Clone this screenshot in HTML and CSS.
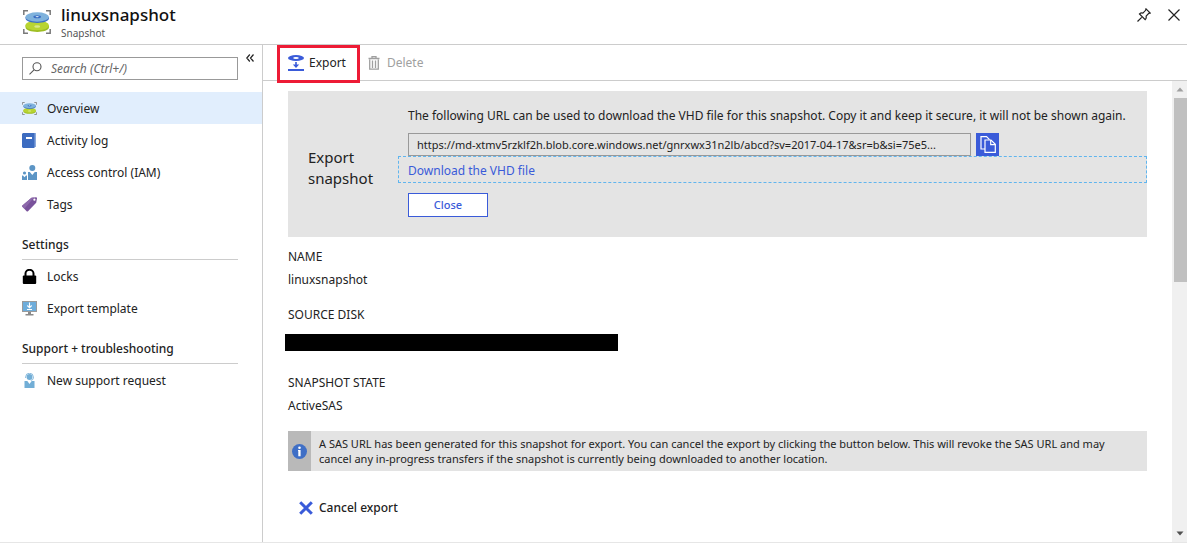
FILE: index.html
```html
<!DOCTYPE html>
<html lang="en">
<head>
<meta charset="utf-8">
<title>linuxsnapshot - Snapshot</title>
<link rel="stylesheet" href="styles.css">
</head>
<body>
<svg class="defs" aria-hidden="true">
  <symbol id="snapshot" viewBox="0 0 28 24">
    <path d="M.8 5V.8H5M23 .8h4.200V5M27.200 19v4.200H23M5 23.200H.8V19" fill="none" stroke="#7a7a7a" stroke-width="1.500"/>
    <path d="M2.500 15.500v1.500c0 6.500 23.500 6.500 23.500 0v-1.500z" fill="#9dbd22"/>
    <ellipse cx="14.200" cy="15.500" rx="11.800" ry="4.800" fill="#b8d432"/>
    <ellipse cx="14.200" cy="16.500" rx="3" ry="1.200" fill="#d9e88a"/>
    <path d="M2.500 7v1c0 6.500 23.500 6.500 23.500 0V7z" fill="#3c6fc4"/>
    <ellipse cx="14.200" cy="7" rx="11.800" ry="4.700" fill="#7fb2dc"/>
    <ellipse cx="14.200" cy="6.800" rx="3.800" ry="1.500" fill="#3c6fc4"/>
    <ellipse cx="14.200" cy="6.600" rx="1.600" ry=".6" fill="#d5e6f5"/>
  </symbol>
</svg>
<header class="header">
  <svg class="header-icon" aria-hidden="true"><use href="#snapshot"/></svg>
  <div class="header-text">
    <h1 class="title">linuxsnapshot</h1>
    <p class="subtitle">Snapshot</p>
  </div>
  <button class="icon-button" aria-label="Pin">
    <svg width="14" height="14" viewBox="0 0 14 14" fill="none" stroke="#222" stroke-width="1.200"><path d="M.5 13.500l4.200-4.200M9 .8l4.200 4.200-1.400.4-2.700 2.800c.4 1.400 0 2.500-.9 3.400L2.500 5.900c1-.9 2.200-1.100 3.400-.8l2.700-2.800z"/></svg>
  </button>
  <button class="icon-button" aria-label="Close blade">
    <svg width="12" height="12" viewBox="0 0 12 12" fill="none" stroke="#222" stroke-width="1.200"><path d="M.5.5l11 11M11.500.5l-11 11"/></svg>
  </button>
</header>
<div class="body">
  <nav class="sidebar">
    <div class="search-row">
      <div class="search">
        <svg width="13" height="13" viewBox="0 0 13 13" fill="none" stroke="#555" stroke-width="1.100" aria-hidden="true"><circle cx="8" cy="4.800" r="4"/><path d="M5 7.800L.5 12.300"/></svg>
        <input class="search-input" type="text" placeholder="Search (Ctrl+/)" aria-label="Search">
      </div>
      <button class="collapse" aria-label="Collapse menu">
        <svg width="8" height="8" viewBox="0 0 8 8" fill="none" stroke="#222" stroke-width="1.200"><path d="M3.800.5L.8 4l3 3.500M7.500.5l-3 3.500 3 3.500"/></svg>
      </button>
    </div>
    <a class="item item-active" href="#"><svg class="item-icon" aria-hidden="true"><use href="#snapshot"/></svg>Overview</a>
    <a class="item" href="#"><svg class="item-icon" viewBox="0 0 15 15" aria-hidden="true"><path d="M1.500 0H14v14H1.500z" fill="#8ba9dc"/><path d="M0 1l1-1h11.500v15H1l-1-1z" fill="#3d6cc0"/><path d="M4 4h6v2H4z" fill="#fff"/></svg>Activity log</a>
    <a class="item" href="#"><svg class="item-icon" viewBox="0 0 15 15" fill="#5c95c5" aria-hidden="true"><circle cx="10.300" cy="3" r="3"/><path d="M6 15V7h1.800l2.500 3 2.500-3H15v8z"/><circle cx="2.500" cy="8" r="1.600"/><path d="M0 15v-4.500h1l1.500 1.700L4 10.500h1V15z"/></svg>Access control (IAM)</a>
    <a class="item" href="#"><svg class="item-icon" viewBox="0 0 15 15" aria-hidden="true"><path d="M9.500.8L14 .2q1 0 1 1l-.8 4.500L6 14.200q-.7.500-1.400 0L.4 9.800q-.6-.7 0-1.300z" fill="#79529b"/><path d="M9.500.8L.4 8.500q-.6.6 0 1.300l2 2L12 .5z" fill="#8d69ab"/><circle cx="12.400" cy="2.700" r="1.100" fill="#fff"/></svg>Tags</a>
    <h2 class="section">Settings</h2>
    <a class="item" href="#"><svg class="item-icon" viewBox="0 0 15 15" aria-hidden="true"><path d="M3.500 7V4.500a4 3.700 0 0 1 8 0V7" fill="none" stroke="#000" stroke-width="2"/><rect x=".8" y="6.500" width="13.400" height="8.500" rx="1" fill="#000"/></svg>Locks</a>
    <a class="item" href="#"><svg class="item-icon" viewBox="0 0 15 15" aria-hidden="true"><path d="M0 0h15v11H0z" fill="#9b9b9b"/><path d="M1 1h13v9H1z" fill="#6eaddb"/><path d="M6 11h3v2h2.500v1.500h-8V13H6z" fill="#8a8a8a"/><path d="M7.500 1.500v5M5.300 4.500l2.200 2.200 2.200-2.200M5 8.500h5" fill="none" stroke="#fff" stroke-width="1.100"/></svg>Export template</a>
    <h2 class="section">Support + troubleshooting</h2>
    <a class="item" href="#"><svg class="item-icon" viewBox="0 0 15 15" aria-hidden="true"><circle cx="7.500" cy="4" r="2.900" fill="#72aed6"/><path d="M3.700 5V3.800a3.800 3.500 0 0 1 7.600 0V5q0 2-2.500 2.400" fill="none" stroke="#82b7dc"/><path d="M2.500 8h2.800l2.200 3 2.200-3h2.800v7h-10z" fill="#72aed6"/></svg>New support request</a>
  </nav>
  <main class="main">
    <div class="toolbar">
      <button class="command command-marked">
        <svg width="16" height="16" viewBox="0 0 16 16" aria-hidden="true"><ellipse cx="8" cy="3" rx="8" ry="3" fill="#3a5bd9"/><ellipse cx="8" cy="3" rx="2.800" ry="1" fill="#fff"/><path d="M7.200 7h1.600v2.500h2.400L8 13 4.800 9.500h2.400zM0 14h16v2H0z" fill="#3a5bd9"/></svg>
        Export
      </button>
      <button class="command" disabled>
        <svg width="12" height="14" viewBox="0 0 12 14" fill="none" stroke="#a0a0a0" stroke-width="1.300" aria-hidden="true"><path d="M.5 2.500h11M4 2V.7h4V2M1.700 3.500v9.700h8.600V3.500M4.500 4.500V12M7.500 4.500V12"/></svg>
        Delete
      </button>
    </div>
    <div class="viewport">
      <div class="content">
        <section class="export">
          <h2 class="export-title">Export snapshot</h2>
          <div class="export-body">
            <p class="export-note">The following URL can be used to download the VHD file for this snapshot. Copy it and keep it secure, it will not be shown again.</p>
            <div class="url-row">
              <input class="url" type="text" readonly aria-label="Download URL" value="https://md-xtmv5rzklf2h.blob.core.windows.net/gnrxwx31n2lb/abcd?sv=2017-04-17&amp;sr=b&amp;si=75e5...">
              <button class="copy" aria-label="Copy">
                <svg width="16" height="17" viewBox="0 0 16 17" fill="none" stroke="#fff" stroke-width="1.200" aria-hidden="true"><path d="M5 13H1V.6h5.500l3 3"/><path d="M5 4h6l4.300 4.300v8H5z" fill="#3a5bd9"/><path d="M10.700 4v4.600h4.600"/></svg>
              </button>
            </div>
            <a class="download" href="#">Download the VHD file</a>
            <button class="close">Close</button>
          </div>
        </section>
        <dl class="facts">
          <dt>NAME</dt>
          <dd>linuxsnapshot</dd>
          <dt>SOURCE DISK</dt>
          <dd class="redacted"></dd>
          <dt>SNAPSHOT STATE</dt>
          <dd>ActiveSAS</dd>
        </dl>
        <div class="notice">
          <div class="notice-icon">
            <svg width="15" height="15" viewBox="0 0 15 15" aria-hidden="true"><circle cx="7.500" cy="7.500" r="7.500" fill="#3f6fc6"/><circle cx="7.500" cy="3.700" r="1.300" fill="#fff"/><path d="M6 6h2.600v6.200H6.300V7H6z" fill="#fff"/></svg>
          </div>
          <p class="notice-text">A SAS URL has been generated for this snapshot for export. You can cancel the export by clicking the button below. This will revoke the SAS URL and may cancel any in-progress transfers if the snapshot is currently being downloaded to another location.</p>
        </div>
        <button class="cancel">
          <svg width="14" height="14" viewBox="0 0 14 14" stroke="#3a5bd9" stroke-width="3" aria-hidden="true"><path d="M1.200 1.200l11.600 11.600M12.800 1.200L1.200 12.800"/></svg>
          Cancel export
        </button>
      </div>
      <div class="scrollbar" aria-hidden="true">
        <svg class="scroll-arrow" viewBox="0 0 15 17"><path d="M4.500 10.500h7L8 6.500z" fill="#a0a0a0"/></svg>
        <div class="thumb"></div>
        <svg class="scroll-arrow" viewBox="0 0 15 17"><path d="M4.500 6.500h7L8 10.500z" fill="#505050"/></svg>
      </div>
    </div>
  </main>
</div>
</body>
</html>
```
FILE: styles.css
```css
* { box-sizing: border-box; }
body {
  margin: 0;
  height: 100vh;
  display: flex;
  flex-direction: column;
  border-bottom: 1px solid #e6e6e6;
  background: #fff;
  color: #222;
  font: 12px/16px "Noto Sans", "Open Sans", sans-serif;
}
h1, h2, p, dl, dd { margin: 0; font-weight: 400; }
button, input { font: inherit; color: inherit; }
button { padding: 0; border: 0; background: none; }
svg { display: block; flex: none; }
a { text-decoration: none; }
.defs { position: absolute; width: 0; height: 0; }

.header {
  display: flex;
  align-items: center;
  height: 45px;
  padding: 0 7px 0 23px;
  border-bottom: 1px solid #ccc;
}
.header-icon { width: 28px; height: 24px; }
.header-text { flex: 1; padding-left: 10px; }
.title { font-size: 17px; line-height: 22px; font-weight: 500; color: #111; }
.subtitle { font-size: 10px; line-height: 14px; color: #555; }
.icon-button { margin: 0 0 14px 17px; }

.body { display: flex; flex: 1; min-height: 0; }
.sidebar { width: 263px; flex: none; border-right: 1px solid #ccc; }
.search-row { display: flex; align-items: flex-start; gap: 8px; padding: 12px 8px 12px 22px; }
.search {
  display: flex;
  flex: 1;
  align-items: center;
  gap: 9px;
  height: 23px;
  padding-left: 6px;
  border: 1px solid #999;
}
.search-input { flex: 1; min-width: 0; padding: 0; border: 0; outline: 0; font-style: italic; }
.search-input::placeholder { color: #666; }
.collapse { margin-top: -3px; }
.item { display: flex; align-items: center; gap: 10px; height: 32px; padding: 2px 0 0 22px; color: #222; }
.item-active { background: #e1eefd; }
.item-icon { width: 15px; height: 15px; margin-bottom: 2px; }
.section {
  height: 40px;
  margin: 0 24px 0 22px;
  padding-top: 17px;
  border-bottom: 1px solid #ccc;
  font-size: 12px;
  font-weight: 500;
}

.main { display: flex; flex: 1; flex-direction: column; min-width: 0; }
.toolbar { display: flex; gap: 22px; height: 36px; padding-left: 25px; border-bottom: 1px solid #ccc; }
.command { position: relative; display: flex; align-items: center; gap: 5px; }
.command:disabled { color: #a0a0a0; gap: 7px; }
.command-marked::after {
  content: "";
  position: absolute;
  inset: 0 -14px -3px -11px;
  border: 3px solid #ed1b35;
}
.viewport { display: flex; flex: 1; min-height: 0; }
.content { flex: 1; min-width: 0; padding: 10px 25px 0; overflow: hidden; }

.export { display: flex; align-items: center; background: #e4e4e4; }
.export-title { width: 110px; padding: 8px 20px 0; font-size: 15px; line-height: 21px; }
.export-body { flex: 1; min-width: 0; padding: 17px 0 20px; }
.export-note { padding-left: 10px; white-space: nowrap; }
.url-row { display: flex; gap: 5px; margin-top: 9px; padding: 0 148px 0 10px; }
.url {
  flex: 1;
  min-width: 0;
  height: 23px;
  padding: 0 8px;
  border: 1px solid #999;
  background: #e4e4e4;
  font-size: 11px;
}
.copy { display: grid; place-items: center; width: 23px; height: 23px; background: #3a5bd9; }
.download { display: block; height: 27px; padding: 5px 9px; border: 1px dashed #60b5ee; line-height: 17px; color: #3a5bd9; }
.close { width: 80px; height: 24px; margin: 10px 0 0 10px; border: 1px solid #3a5bd9; background: #fff; color: #3a5bd9; font-size: 11px; font-weight: 500; }

.facts { padding-top: 8px; line-height: 23px; }
.facts dd { margin-bottom: 12px; }
.facts .redacted { width: 333px; height: 17px; margin: 8px 0 20px -3px; background: #000; }

.notice { display: flex; margin-top: 14px; background: #e3e3e3; }
.notice-icon { display: grid; place-items: center; width: 23px; background: #b9b9b9; }
.notice-text { flex: 1; padding: 5px 8px; font-size: 11px; line-height: 15px; }
.cancel { display: flex; align-items: center; gap: 6px; margin: 29px 0 0 11px; font-weight: 500; }

.scrollbar { display: flex; flex-direction: column; width: 15px; background: #f0f0f0; }
.scroll-arrow { width: 15px; height: 17px; }
.scroll-arrow:last-child { margin-top: auto; }
.thumb { height: 40%; margin-left: 2px; background: #c0c0c0; }
```
